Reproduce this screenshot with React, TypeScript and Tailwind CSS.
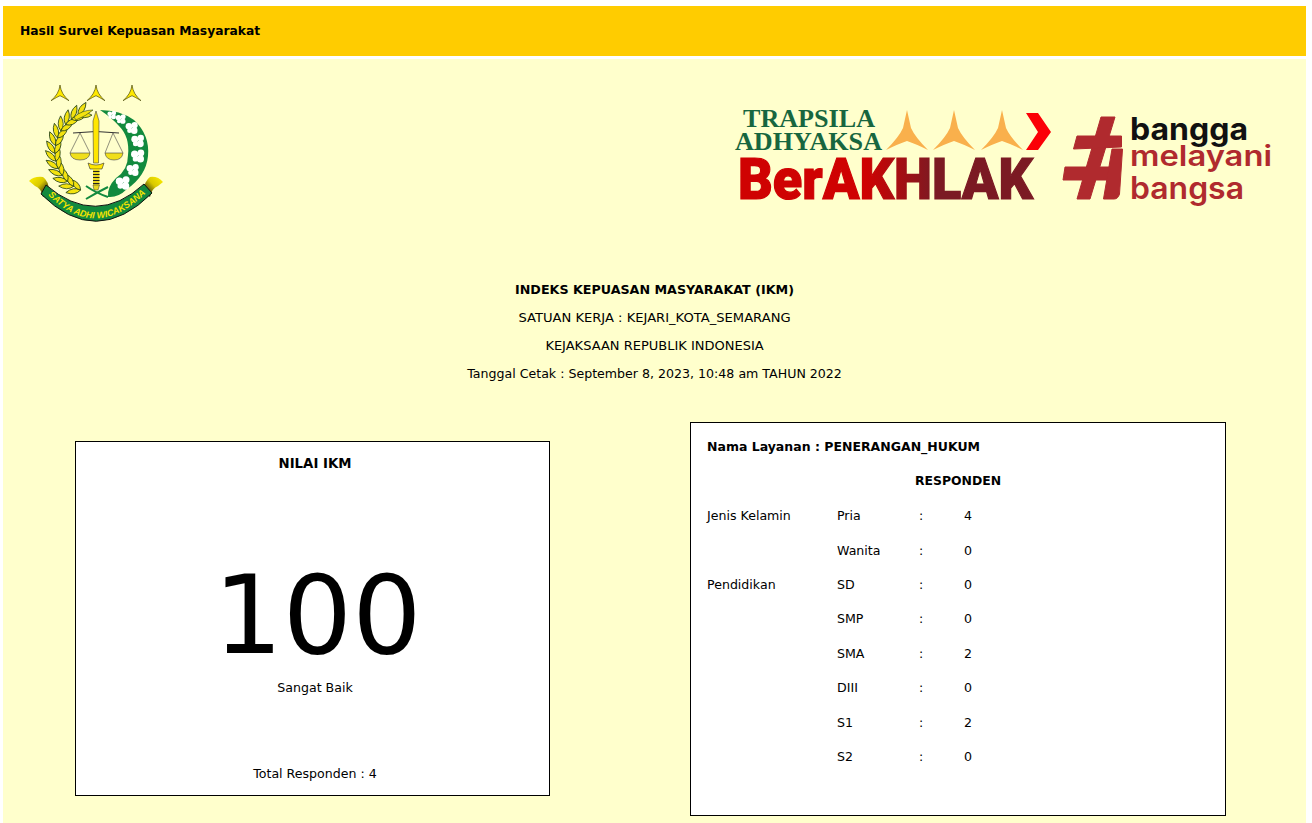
import React from 'react';

const rows = [
  { group: 'Jenis Kelamin', name: 'Pria', value: 4 },
  { group: '', name: 'Wanita', value: 0 },
  { group: 'Pendidikan', name: 'SD', value: 0 },
  { group: '', name: 'SMP', value: 0 },
  { group: '', name: 'SMA', value: 2 },
  { group: '', name: 'DIII', value: 0 },
  { group: '', name: 'S1', value: 2 },
  { group: '', name: 'S2', value: 0 },
];

const polar = (cx: number, cy: number, r: number, deg: number) => {
  const rad = (deg * Math.PI) / 180;
  return { x: cx + r * Math.cos(rad), y: cy + r * Math.sin(rad) };
};

// wheat leaves on the left arc of the emblem
const wheatAngles = [112, 123, 134, 145, 156, 167, 178, 189, 200, 211, 222, 233, 244];
// cotton bolls on the right arc, x/y in emblem coordinates
const cottonBolls = [
  { x: 92, y: 40, s: 0.8 },
  { x: 101, y: 44, s: 0.9 },
  { x: 112, y: 53, s: 1.1 },
  { x: 118, y: 66, s: 1.15 },
  { x: 118, y: 81, s: 1.2 },
  { x: 113, y: 95, s: 1.1 },
  { x: 103, y: 108, s: 1.25 },
];

const Trisula = ({ x }: { x: number }) => (
  <path
    d={`M${x} 10 Q${x + 1} 19 ${x + 9} 25.7 Q${x + 3} 22 ${x} 20.7 Q${x - 3} 22 ${x - 9} 25.7 Q${x - 1} 19 ${x} 10Z`}
    fill="#ffe900"
    stroke="#4a4a10"
    strokeWidth="0.7"
  />
);

const Leaf = ({ x, y, rot, len }: { x: number; y: number; rot: number; len: number }) => (
  <path
    d={`M0 0 Q${len * 0.45} -5 ${len} 0 Q${len * 0.45} 5 0 0Z`}
    fill="#f3e20f"
    stroke="#27451a"
    strokeWidth="0.8"
    transform={`translate(${x} ${y}) rotate(${rot})`}
  />
);

const Emblem = () => (
  <svg width="160" height="155" viewBox="0 0 160 155" className="shrink-0">
    <defs>
      <linearGradient id="ribbonEndL" x1="0" y1="0" x2="1" y2="1">
        <stop offset="0" stopColor="#fff000" />
        <stop offset="0.45" stopColor="#d8c800" />
        <stop offset="0.9" stopColor="#111" />
      </linearGradient>
      <linearGradient id="ribbonEndR" x1="1" y1="0" x2="0" y2="1">
        <stop offset="0" stopColor="#fff000" />
        <stop offset="0.45" stopColor="#d8c800" />
        <stop offset="0.9" stopColor="#111" />
      </linearGradient>
      <path id="ribbonText" d="M28 120 Q76 168 127 117" />
    </defs>
    <Trisula x={40} />
    <Trisula x={76} />
    <Trisula x={112} />

    {/* wheat */}
    {wheatAngles.map((a) => {
      const p = polar(76, 77, 41, a);
      return (
        <g key={a}>
          <Leaf x={p.x} y={p.y} rot={a + 90 - 32} len={15} />
          <Leaf x={p.x} y={p.y} rot={a + 90 + 26} len={14} />
        </g>
      );
    })}
    <path d="M54 42 Q62 35 73 35 Q66 41 56 45Z" fill="#f3e20f" stroke="#27451a" strokeWidth="0.6" />

    {/* cotton */}
    <path
      d="M80 35 Q100 35 114 45 Q130 60 128 81 Q126 101 107 114 Q98 123 88 122 Q87 112 96 103 Q108 95 108 80 Q110 62 99 51 Q92 43 80 35Z"
      fill="#128a3e"
    />
    {cottonBolls.map((b) => (
      <g key={b.x + b.y} transform={`translate(${b.x} ${b.y}) scale(${b.s})`} fill="#fff">
        <circle cx="-2.8" cy="-1.5" r="3" />
        <circle cx="2.4" cy="-2.6" r="2.8" />
        <circle cx="2" cy="2.4" r="3" />
        <circle cx="-2.2" cy="2.4" r="2.2" />
      </g>
    ))}

    {/* scales */}
    <path d="M53 58 Q76 55 99 58" fill="none" stroke="#333" strokeWidth="1" />
    <path d="M60 58 L50 78 M60 58 L70 78 M93 58 L85 78 M93 58 L103 78" stroke="#444" strokeWidth="0.6" fill="none" />
    <path d="M50 78 H70 Q69 85 60 85 Q51 85 50 78Z" fill="#f0df1a" stroke="#444" strokeWidth="0.6" />
    <path d="M85 78 H103 Q102 85 94 85 Q86 85 85 78Z" fill="#f0df1a" stroke="#444" strokeWidth="0.6" />

    {/* keris */}
    <path d="M76 36 L79 46 L78.5 88 H73.5 L73 46Z" fill="#ffe600" stroke="#444" strokeWidth="0.6" />
    <path d="M68 88 Q76 92 84 88 L82 94 H70Z" fill="#ffe600" stroke="#333" strokeWidth="0.6" />
    <rect x="73" y="94" width="6.5" height="16" fill="#e8d820" />
    {[96, 99, 102, 105, 108].map((y) => (
      <rect key={y} x="73" y={y} width="6.5" height="1" fill="#222" />
    ))}
    <path d="M73 110 H79.5 L78 115 H74Z" fill="#e8d820" stroke="#333" strokeWidth="0.5" />
    <path d="M66 111 Q76 118 88 122 M88 112 Q76 118 66 124" fill="none" stroke="#128a3e" strokeWidth="2" />

    {/* ribbon */}
    <path d="M9 106 Q14 101 23 102 Q29 106 29 117 L23 122 Q21 113 15 111Z" fill="url(#ribbonEndL)" />
    <path d="M143 107 Q138 101 130 102 Q124 106 124 117 L130 122 Q132 113 138 111Z" fill="url(#ribbonEndR)" />
    <path d="M26 110 Q76 153 124 109 L132 118 Q76 174 21 119Z" fill="#128a3e" stroke="#111" strokeWidth="1" />
    <text fontSize="9" fontStyle="italic" fontWeight="700" fill="#f5e400" className="font-['Liberation_Sans',sans-serif]">
      <textPath href="#ribbonText" textLength="112">
        SATYA ADHI WICAKSANA
      </textPath>
    </text>
  </svg>
);

const orange = (x: number) =>
  `M${x} 10 L${x + 4} 28 Q${x + 8} 37 ${x + 21} 50 Q${x + 9} 44 ${x} 41 Q${x - 9} 44 ${x - 21} 50 Q${x - 8} 37 ${x - 4} 28Z`;

const CampaignLogos = () => (
  <svg width="550" height="115" viewBox="0 0 550 115" className="shrink-0 mt-[25px]">
    <defs>
      <linearGradient id="akhlak" gradientUnits="userSpaceOnUse" x1="135" y1="0" x2="205" y2="0">
        <stop offset="0" stopColor="#cf0202" />
        <stop offset="1" stopColor="#7b1a23" />
      </linearGradient>
    </defs>
    <text x="13" y="27" fontSize="26" fontWeight="700" fill="#17663f" textLength="132" lengthAdjust="spacingAndGlyphs" className="font-['Liberation_Serif',serif]">
      TRAPSILA
    </text>
    <text x="5" y="50" fontSize="26" fontWeight="700" fill="#17663f" textLength="147" lengthAdjust="spacingAndGlyphs" className="font-['Liberation_Serif',serif]">
      ADHYAKSA
    </text>
    <path d={orange(177)} fill="#f9b04c" />
    <path d={orange(224)} fill="#f9b04c" />
    <path d={orange(272)} fill="#f9b04c" />
    <path d="M296 13 H308 L321 32 L308 50 H296 L308 32Z" fill="#fb0007" />
    <text x="8" y="99" fontSize="58" fontWeight="900" fill="url(#akhlak)" stroke="url(#akhlak)" strokeWidth="1.2" textLength="295" lengthAdjust="spacingAndGlyphs" className="font-['Roboto',sans-serif]">
      BerAKHLAK
    </text>

    {/* hash mark */}
    <g fill="#b02a2e" stroke="#b02a2e" strokeWidth="1" strokeLinejoin="round">
      <path d="M371 17 H385 L360 99 H347Z" />
      <path d="M347 36 H391.5 V47 L343.5 49Z" />
      <path d="M335 67 H380 L378.5 80 H333Z" />
      <path d="M382 49 L392.5 49 L389.5 94 Q388 99 384 99 H373.5Z" />
    </g>
    <text x="400" y="40" fontSize="31" fontWeight="700" fill="#111" textLength="118" lengthAdjust="spacingAndGlyphs" className="font-['Inter',sans-serif]">
      bangga
    </text>
    <text x="400" y="66" fontSize="28" fontWeight="600" fill="#b02a2e" textLength="142" lengthAdjust="spacingAndGlyphs" className="font-['Inter',sans-serif]">
      melayani
    </text>
    <text x="400" y="99" fontSize="31" fontWeight="600" fill="#b02a2e" textLength="114" lengthAdjust="spacingAndGlyphs" className="font-['Inter',sans-serif]">
      bangsa
    </text>
  </svg>
);

export default function App() {
  return (
    <div className="h-[823px] overflow-hidden bg-white pt-[6px] pl-[3px] pr-[6px] flex flex-col text-black text-[12.6px] leading-[16px] font-['DejaVu_Sans',Verdana,sans-serif]">
      <header className="h-[50px] shrink-0 bg-[#ffcc00] flex items-center pl-[17px] font-bold text-[12.3px]">
        Hasil Survei Kepuasan Masyarakat
      </header>

      <main className="mt-[3px] flex-1 bg-[#ffffcc]">
        <div className="flex justify-between items-start pt-[16px] pl-[17px] pr-[26px]">
          <Emblem />
          <CampaignLogos />
        </div>

        <div className="mt-[46px] text-center leading-[28px]">
          <div className="font-bold text-[12.7px]">INDEKS KEPUASAN MASYARAKAT (IKM)</div>
          <div className="text-[13.1px]">SATUAN KERJA : KEJARI_KOTA_SEMARANG</div>
          <div className="text-[13px]">KEJAKSAAN REPUBLIK INDONESIA</div>
          <div>Tanggal Cetak : September 8, 2023, 10:48 am TAHUN 2022</div>
        </div>

        <div className="mt-[34px] flex items-start pl-[72px] gap-[140px]">
          <section className="mt-[19px] w-[475px] h-[355px] border border-black bg-white flex flex-col items-center pt-[14px] pl-[5px]">
            <div className="font-bold text-[13.3px]">NILAI IKM</div>
            <div className="mt-[84px] ml-[5px] text-[109px] leading-[120px]">100</div>
            <div className="mt-[4px]">Sangat Baik</div>
            <div className="mt-[70px]">Total Responden : 4</div>
          </section>

          <section className="w-[536px] h-[394px] border border-black bg-white pt-[7px] pl-[16px]">
            <div className="h-[34px] flex items-center font-bold text-[12.5px]">Nama Layanan : PENERANGAN_HUKUM</div>
            <div className="h-[34px] flex items-center justify-center font-bold text-[12.4px] pr-[16px]">RESPONDEN</div>
            <div className="mt-[1px] grid grid-cols-[130px_82px_45px_1fr] auto-rows-[34.4px] items-center">
              {rows.map((row) => (
                <React.Fragment key={row.name}>
                  <div>{row.group}</div>
                  <div>{row.name}</div>
                  <div>:</div>
                  <div>{row.value}</div>
                </React.Fragment>
              ))}
            </div>
          </section>
        </div>
      </main>
    </div>
  );
}
